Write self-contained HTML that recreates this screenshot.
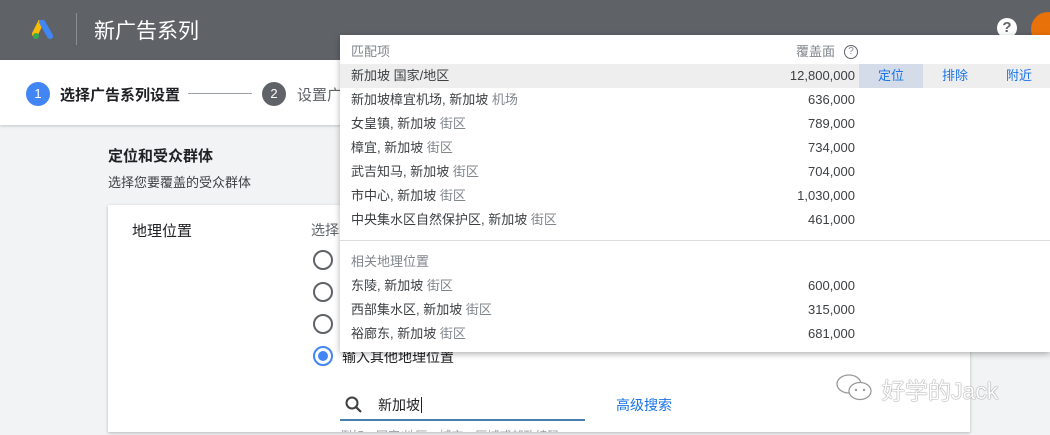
<!DOCTYPE html>
<html><head><meta charset="utf-8"><style>
*{margin:0;padding:0;box-sizing:border-box}
body{width:1050px;height:435px;overflow:hidden;background:#f1f3f4;font-family:"Liberation Sans","Noto Sans CJK SC",sans-serif;position:relative;color:#202124}
.abs{position:absolute}
.hdr{left:0;top:0;width:1050px;height:60px;background:#5f6368;box-shadow:0 2px 4px rgba(0,0,0,.3)}
.step{left:0;top:60px;width:1050px;height:65px;background:#fff;box-shadow:0 1px 3px rgba(0,0,0,.2)}
.card{left:108px;top:205px;width:862px;height:227px;background:#fff;box-shadow:0 1px 3px rgba(0,0,0,.25);overflow:hidden}
.dd{left:340px;top:35px;width:710px;height:317px;background:#fff;box-shadow:0 2px 6px rgba(0,0,0,.3)}
.row{position:absolute;left:0;width:710px;height:24px;font-size:13px;line-height:24px;color:#3c4043}
.row .n{position:absolute;left:11px}
.row .c{position:absolute;right:195px}
.g{color:#80868b}
.radio{width:20px;height:20px;border:2px solid #5f6368;border-radius:50%}
</style></head><body>
<div class="abs hdr">
 <svg class="abs" style="left:32px;top:20px" width="24" height="20" viewBox="0 0 24 20"><path d="M9 2 L3 14" stroke="#fbbc04" stroke-width="6" stroke-linecap="round"/><path d="M10 2 L18 16" stroke="#4285f4" stroke-width="6" stroke-linecap="round"/><circle cx="4" cy="16" r="3" fill="#34a853"/></svg>
 <div class="abs" style="left:76px;top:13px;width:1px;height:32px;background:#8a8d91"></div>
 <div class="abs" style="left:94px;top:15px;font-size:21px;color:#fff">新广告系列</div>
 <div class="abs" style="left:997px;top:18px;width:20px;height:20px;border-radius:50%;background:#fff;color:#5f6368;font-weight:bold;font-size:15px;text-align:center;line-height:20px">?</div>
 <div class="abs" style="left:1031px;top:12px;width:34px;height:34px;border-radius:50%;background:#e8710a"></div>
</div>
<div class="abs step">
 <div class="abs" style="left:26px;top:22px;width:24px;height:24px;border-radius:50%;background:#4285f4;color:#fff;font-size:13px;text-align:center;line-height:24px">1</div>
 <div class="abs" style="left:60px;top:24px;font-size:15px;font-weight:bold;color:#202124">选择广告系列设置</div>
 <div class="abs" style="left:188px;top:33px;width:64px;height:1px;background:#9aa0a6"></div>
 <div class="abs" style="left:262px;top:22px;width:24px;height:24px;border-radius:50%;background:#5f6368;color:#fff;font-size:13px;text-align:center;line-height:24px">2</div>
 <div class="abs" style="left:297px;top:24px;font-size:15px;color:#5f6368">设置广告组</div>
</div>
<div class="abs" style="left:108px;top:145px;font-size:15px;font-weight:bold">定位和受众群体</div>
<div class="abs" style="left:108px;top:172px;font-size:13px;color:#3c4043">选择您要覆盖的受众群体</div>
<div class="abs card">
 <div class="abs" style="left:24px;top:15px;font-size:15px">地理位置</div>
 <div class="abs" style="left:203px;top:15px;font-size:14px;color:#5f6368">选择</div>
 <div class="abs radio" style="left:205px;top:45px"></div>
 <div class="abs radio" style="left:205px;top:77px"></div>
 <div class="abs radio" style="left:205px;top:109px"></div>
 <div class="abs radio" style="left:205px;top:141px;border-color:#4285f4"><div style="margin:3px;width:10px;height:10px;border-radius:50%;background:#4285f4"></div></div>
 <div class="abs" style="left:234px;top:142px;font-size:14px">输入其他地理位置</div>
 <svg class="abs" style="left:236px;top:190px" width="20" height="20" viewBox="0 0 20 20"><circle cx="8" cy="8" r="5.5" fill="none" stroke="#3c4043" stroke-width="2"/><path d="M12 12 L17 17" stroke="#3c4043" stroke-width="2.2"/></svg>
 <div class="abs" style="left:270px;top:190px;font-size:14px">新加坡<span style="border-left:1px solid #202124;margin-left:1px"></span></div>
 <div class="abs" style="left:232px;top:214px;width:245px;height:2px;background:#4a7fb0"></div>
 <div class="abs" style="left:508px;top:190px;font-size:14px;color:#1a73e8">高级搜索</div>
 <div class="abs" style="left:232px;top:222px;font-size:12px;color:#9aa0a6">例如，国家/地区、城市、区域或邮政编码</div>
</div>
<div class="abs dd">
 <div class="row" style="top:5px"><span class="n g">匹配项</span><span class="c g" style="right:215px">覆盖面</span><span class="g" style="position:absolute;left:504px;top:5px;width:14px;height:14px;border:1.5px solid #5f6368;border-radius:50%;font-size:10px;line-height:11px;text-align:center">?</span></div>
 <div class="row" style="top:29px;background:#eeeeee"><span class="n">新加坡 国家/地区</span><span class="c">12,800,000</span>
  <span style="position:absolute;left:519px;width:64px;height:24px;background:#d4dcea;color:#1a73e8;text-align:center">定位</span>
  <span style="position:absolute;left:583px;width:64px;color:#1a73e8;text-align:center">排除</span>
  <span style="position:absolute;left:647px;width:64px;color:#1a73e8;text-align:center">附近</span></div>
 <div class="row" style="top:53px"><span class="n">新加坡樟宜机场, 新加坡 <span class="g">机场</span></span><span class="c">636,000</span></div>
 <div class="row" style="top:77px"><span class="n">女皇镇, 新加坡 <span class="g">街区</span></span><span class="c">789,000</span></div>
 <div class="row" style="top:101px"><span class="n">樟宜, 新加坡 <span class="g">街区</span></span><span class="c">734,000</span></div>
 <div class="row" style="top:125px"><span class="n">武吉知马, 新加坡 <span class="g">街区</span></span><span class="c">704,000</span></div>
 <div class="row" style="top:149px"><span class="n">市中心, 新加坡 <span class="g">街区</span></span><span class="c">1,030,000</span></div>
 <div class="row" style="top:173px"><span class="n">中央集水区自然保护区, 新加坡 <span class="g">街区</span></span><span class="c">461,000</span></div>
 <div class="abs" style="left:0;top:205px;width:710px;height:1px;background:#dadce0"></div>
 <div class="row" style="top:215px"><span class="n g">相关地理位置</span></div>
 <div class="row" style="top:239px"><span class="n">东陵, 新加坡 <span class="g">街区</span></span><span class="c">600,000</span></div>
 <div class="row" style="top:263px"><span class="n">西部集水区, 新加坡 <span class="g">街区</span></span><span class="c">315,000</span></div>
 <div class="row" style="top:287px"><span class="n">裕廊东, 新加坡 <span class="g">街区</span></span><span class="c">681,000</span></div>
</div>
<svg class="abs" style="left:834px;top:372px" width="42" height="32" viewBox="0 0 42 32"><ellipse cx="15" cy="12" rx="12" ry="9" fill="none" stroke="#999" stroke-width="1.3"/><ellipse cx="26" cy="19" rx="11" ry="8.5" fill="#fff" stroke="#999" stroke-width="1.3"/><circle cx="22" cy="18" r="1.2" fill="#999"/><circle cx="30" cy="18" r="1.2" fill="#999"/></svg>
<div class="abs" style="left:882px;top:372px;font-size:23px;color:#fff;text-shadow:0 0 1px #777,0 0 1px #777">好学的Jack</div>
</body></html>
